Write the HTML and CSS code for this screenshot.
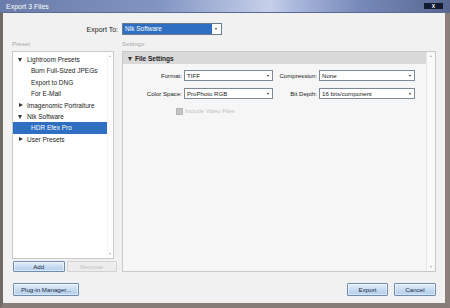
FILE: index.html
```html
<!DOCTYPE html>
<html lang="en">
<head>
  <meta charset="UTF-8">
  <title>Export 3 Files</title>
  <link rel="stylesheet" href="styles.css">
</head>
<body>
  <div class="window">
    <div class="titlebar">
      <span class="title">Export 3 Files</span>
      <span class="close">X</span>
    </div>
    <div class="content">
      <div class="export-to">
        <span class="label">Export To:</span>
        <div class="select active">Nik Software<span class="arrow"></span></div>
      </div>

      <div class="main">
        <div class="preset-col">
          <div class="caption">Preset:</div>
          <div class="list">
            <div class="rows">
              <div class="row group"><span class="tri open"></span>Lightroom Presets</div>
              <div class="row child">Burn Full-Sized JPEGs</div>
              <div class="row child">Export to DNG</div>
              <div class="row child">For E-Mail</div>
              <div class="row group"><span class="tri closed"></span>Imagenomic Portraiture</div>
              <div class="row group"><span class="tri open"></span>Nik Software</div>
              <div class="row child selected">HDR Efex Pro</div>
              <div class="row group"><span class="tri closed"></span>User Presets</div>
            </div>
            <div class="scroll"><span class="up"></span><span class="dn"></span></div>
          </div>
          <div class="list-buttons">
            <button class="btn add">Add</button>
            <button class="btn remove" disabled>Remove</button>
          </div>
        </div>

        <div class="settings-col">
          <div class="caption">Settings:</div>
          <div class="settings">
            <div class="settings-body">
              <div class="section-head"><span class="tri open"></span>File Settings</div>
              <div class="fields">
                <span class="flabel">Format:</span>
                <div class="select">TIFF<span class="arrow"></span></div>
                <span class="flabel">Compression:</span>
                <div class="select">None<span class="arrow"></span></div>
                <span class="flabel">Color Space:</span>
                <div class="select">ProPhoto RGB<span class="arrow"></span></div>
                <span class="flabel">Bit Depth:</span>
                <div class="select">16 bits/component<span class="arrow"></span></div>
              </div>
              <div class="check-row">
                <span class="checkbox"></span>Include Video Files
              </div>
            </div>
            <div class="scroll"><span class="up"></span><span class="dn"></span></div>
          </div>
        </div>
      </div>

      <div class="footer">
        <button class="btn plugin">Plug-in Manager...</button>
        <div class="spacer"></div>
        <button class="btn export">Export</button>
        <button class="btn cancel">Cancel</button>
      </div>
    </div>
  </div>
</body>
</html>
```

FILE: styles.css
```css
* {
  box-sizing: border-box;
}
body {
  margin: 0;
  width: 450px;
  height: 308px;
  overflow: hidden;
  font-family: "Liberation Sans", Arial, sans-serif;
  font-size: 6.5px;
  color: #222;
}
.window {
  width: 450px;
  height: 308px;
  display: flex;
  flex-direction: column;
  background-color: #f1f1f1;
  border-left: 3px solid #6f6a66;
  border-right: 5px solid #8a7f79;
  border-bottom: 5px solid #877c76;
}
.titlebar {
  height: 13px;
  margin-left: -3px;
  margin-right: -5px;
  display: flex;
  align-items: center;
  padding: 0 6px;
  background: linear-gradient(to right, #6a7ca9 0%, #8194c2 35%, #c6d0ea 60%, #a9b6dc 66%, #7789b9 80%, #56668f 100%);
  color: #fff;
  font-size: 7px;
  border-bottom: 1px solid #5b6a91;
}
.title {
  flex: 1;
}
.close {
  width: 19px;
  height: 6px;
  margin-right: 1px;
  background-color: #121a30;
  color: #fff;
  font-size: 5px;
  font-weight: bold;
  line-height: 6px;
  text-align: center;
}
.content {
  flex: 1;
  display: flex;
  flex-direction: column;
  padding: 10px 9px 0 9px;
}
.export-to {
  display: flex;
  align-items: center;
  height: 12px;
}
.export-to .label {
  width: 106px;
  text-align: right;
  margin-right: 4px;
  font-size: 7px;
}
.export-to .select {
  width: 100px;
  height: 12px;
}
.select {
  position: relative;
  height: 11px;
  background-color: #fff;
  border: 1px solid #7d8a96;
  padding-left: 2px;
  line-height: 9px;
  font-size: 6.1px;
  white-space: nowrap;
}
.select.active {
  background-color: #2f6fc2;
  color: #fff;
  line-height: 10px;
  font-size: 6.5px;
  border-color: #6b7b8c;
}
.select.active .arrow {
  background-color: #fff;
  width: 9px;
  height: 10px;
}
.arrow {
  position: absolute;
  right: 0;
  top: 0;
  width: 8px;
  height: 9px;
}
.arrow::after {
  content: "";
  position: absolute;
  left: 3px;
  top: 4px;
  border-left: 1.5px solid transparent;
  border-right: 1.5px solid transparent;
  border-top: 2px solid #333;
}
.main {
  display: flex;
  margin-top: 4px;
}
.caption {
  height: 12px;
  line-height: 9px;
  color: #a8a8a8;
  font-size: 6.1px;
}
.preset-col {
  width: 105px;
  margin-right: 5px;
}
.list {
  width: 102px;
  height: 208px;
  background-color: #fff;
  border: 1px solid #c9c9c9;
  display: flex;
}
.rows {
  flex: 1;
  min-width: 0;
  padding-top: 2px;
}
.row {
  height: 11.4px;
  line-height: 11.4px;
  display: flex;
  align-items: center;
  white-space: nowrap;
}
.row.group {
  padding-left: 5px;
}
.row.child {
  padding-left: 18px;
}
.row.selected {
  background-color: #2f6fc2;
  color: #fff;
}
.tri {
  flex: none;
  width: 9px;
  height: 5px;
  position: relative;
}
.tri::after {
  content: "";
  position: absolute;
  left: 0;
  top: 0;
}
.tri.open::after {
  top: 1px;
  border-left: 2.5px solid transparent;
  border-right: 2.5px solid transparent;
  border-top: 4px solid #333;
}
.tri.closed::after {
  left: 1px;
  border-top: 2.5px solid transparent;
  border-bottom: 2.5px solid transparent;
  border-left: 4px solid #333;
}
.scroll {
  flex: none;
  width: 6px;
  position: relative;
  border-left: 1px solid #f4f4f4;
}
.scroll .up, .scroll .dn {
  position: absolute;
  left: 1px;
  border-left: 1.5px solid transparent;
  border-right: 1.5px solid transparent;
}
.scroll .up {
  top: 3px;
  border-bottom: 2px solid #b0b0b0;
}
.scroll .dn {
  bottom: 3px;
  border-top: 2px solid #b0b0b0;
}
.list-buttons {
  display: flex;
  gap: 2px;
  margin: 2px 0 0 1px;
}
.btn {
  font-family: "Liberation Sans", Arial, sans-serif;
  font-size: 6.2px;
  color: #1a2a44;
  padding: 0;
  border: 1px solid #6f8db3;
  border-radius: 1px;
  background: linear-gradient(#e4effa, #c4daf1 55%, #b4cfec);
  box-shadow: inset 0 0 0 1px rgba(255, 255, 255, 0.5);
}
.btn.add {
  width: 52px;
  height: 11px;
}
.btn.remove {
  width: 51px;
  height: 11px;
  background: #ededed;
  border-color: #d3d3d3;
  color: #c2c2c2;
  box-shadow: none;
}
.settings-col {
  width: 316px;
}
.settings {
  height: 221px;
  border: 1px solid #c9c9c9;
  background-color: #f6f6f6;
  display: flex;
}
.settings .scroll {
  width: 9px;
  background-color: #f9f9f9;
  border-left: 1px solid #e6e6e6;
}
.settings .scroll .up, .settings .scroll .dn {
  left: 3px;
}
.settings-body {
  flex: 1;
  min-width: 0;
}
.section-head {
  height: 12px;
  background-color: #d9d9d9;
  display: flex;
  align-items: center;
  padding-left: 5px;
  font-weight: bold;
  font-size: 6.5px;
}
.section-head .tri {
  width: 7px;
}
.fields {
  display: grid;
  grid-template-columns: 59px 89px 42px 96px;
  grid-auto-rows: 11px;
  column-gap: 2px;
  row-gap: 7px;
  margin-top: 6px;
}
.flabel {
  text-align: right;
  line-height: 11px;
  font-size: 6.1px;
  white-space: nowrap;
}
.check-row {
  display: flex;
  align-items: center;
  margin-top: 8px;
  padding-left: 53px;
  color: #bdbdbd;
  font-size: 5.9px;
  height: 8px;
}
.checkbox {
  width: 7px;
  height: 7px;
  background-color: #c4c4c4;
  border: 1px solid #b5b5b5;
  margin-right: 2px;
}
.footer {
  display: flex;
  align-items: center;
  margin-top: 11px;
  padding-left: 1px;
}
.footer .btn {
  height: 13px;
}
.btn.plugin {
  width: 66px;
}
.spacer {
  flex: 1;
}
.btn.export {
  width: 41px;
  margin-right: 6px;
}
.btn.cancel {
  width: 42px;
}
```
